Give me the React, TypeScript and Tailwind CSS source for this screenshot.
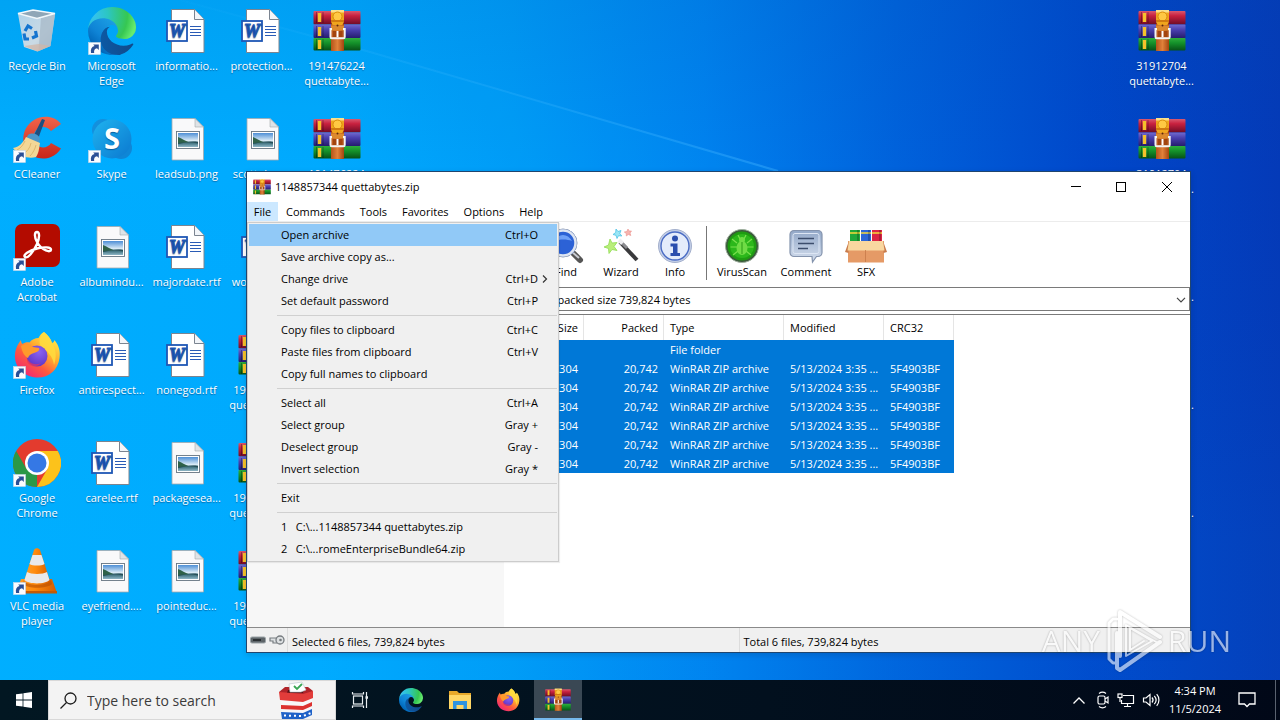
import type { ReactNode } from "react";
import { clsx } from "clsx";

// ---------- icons ----------

function ShortcutArrow() {
  return (
    <g>
      <rect x="0.5" y="35.5" width="12" height="12" fill="#fafcff" stroke="#c8d8e8" strokeWidth="0.6" />
      <path d="M3 46c-.6-3.800.6-6.200 3.600-6.900L5.200 37.500h5.600v5.500L9 41.300c-2.400.5-3.300 2-2.800 4.700z" fill="#2a4f96" />
    </g>
  );
}

function EdgePaths() {
  return (
    <>
      <defs>
        <linearGradient id="edgeDark" x1="63" y1="177" x2="241" y2="177" gradientUnits="userSpaceOnUse">
          <stop offset="0" stopColor="#0c59a4" />
          <stop offset="1" stopColor="#114a8b" />
        </linearGradient>
        <linearGradient id="edgeBlue" x1="157" y1="100" x2="46" y2="221" gradientUnits="userSpaceOnUse">
          <stop offset="0" stopColor="#1b9de2" />
          <stop offset="0.6" stopColor="#0f84d6" />
          <stop offset="1" stopColor="#0066b8" />
        </linearGradient>
        <radialGradient id="edgeGreen" cx="26" cy="45" r="230" gradientUnits="userSpaceOnUse">
          <stop offset="0" stopColor="#35c1f1" />
          <stop offset="0.35" stopColor="#2cc6c2" />
          <stop offset="0.8" stopColor="#36c752" />
          <stop offset="1" stopColor="#66eb6e" />
        </radialGradient>
      </defs>
      <path
        fill="url(#edgeDark)"
        d="M235.68 195.25a93.73 93.73 0 01-10.54 4.71 101.87 101.87 0 01-35.9 6.46c-47.32 0-88.54-32.55-88.54-74.32a31.48 31.48 0 0116.43-27.31c-42.8 1.8-53.8 46.4-53.8 72.53 0 73.88 68.09 81.37 82.76 81.37 7.91 0 19.84-2.3 27-4.56l1.31-.44a128.34 128.34 0 0066.6-52.8 4 4 0 00-5.32-5.64z"
      />
      <path
        fill="url(#edgeBlue)"
        d="M105.73 241.42a79.2 79.2 0 01-22.74-21.34 80.72 80.72 0 0129.53-120c3.12-1.47 8.45-4.13 15.54-4a32.35 32.35 0 0125.69 13 31.88 31.88 0 016.36 18.66c0-.21 24.46-79.6-80-79.6-43.9 0-80 41.66-80 78.21a130.15 130.15 0 0012.11 56 128 128 0 00156.38 67.11 75.55 75.55 0 01-62.78-8z"
      />
      <path
        fill="url(#edgeGreen)"
        d="M152.33 148.86c-.81 1-3.3 2.5-3.3 5.66 0 2.61 1.7 5.12 4.72 7.23 14.38 10 41.49 8.68 41.56 8.68a59.56 59.56 0 0030.27-8.35 61.38 61.38 0 0030.43-52.88c.26-22.41-8-37.31-11.34-43.91C223.46 23.84 177.72 0 128 0A128 128 0 000 126.2c.48-36.54 36.8-66.05 80-66.05 3.5 0 23.46.34 42 10.07 16.34 8.58 24.9 18.94 30.85 29.21 6.18 10.67 7.28 24.15 7.28 29.52s-2.74 13.33-7.8 19.91z"
      />
    </>
  );
}

function EdgeIcon() {
  return (
    <svg viewBox="0 0 48 48" className="size-12">
      <g transform="scale(0.1875)">
        <EdgePaths />
      </g>
      <ShortcutArrow />
    </svg>
  );
}

function RarIcon({ className = "size-12" }: { className?: string }) {
  return (
    <svg viewBox="0 0 48 48" className={className}>
      <defs>
        <linearGradient id="bookRed" x1="0" y1="0" x2="0" y2="1">
          <stop offset="0" stopColor="#d9596f" />
          <stop offset="0.35" stopColor="#c8213f" />
          <stop offset="1" stopColor="#6e0c26" />
        </linearGradient>
        <linearGradient id="bookBlue" x1="0" y1="0" x2="0" y2="1">
          <stop offset="0" stopColor="#706bd0" />
          <stop offset="0.4" stopColor="#4a3fae" />
          <stop offset="1" stopColor="#251c6e" />
        </linearGradient>
        <linearGradient id="bookGreen" x1="0" y1="0" x2="0" y2="1">
          <stop offset="0" stopColor="#2fae3c" />
          <stop offset="0.4" stopColor="#14912a" />
          <stop offset="1" stopColor="#075217" />
        </linearGradient>
        <linearGradient id="strap" x1="0" y1="0" x2="1" y2="0">
          <stop offset="0" stopColor="#b5541a" />
          <stop offset="0.5" stopColor="#e0813a" />
          <stop offset="1" stopColor="#a3440f" />
        </linearGradient>
      </defs>
      <rect x="0.500" y="4" width="47" height="13.500" rx="1" fill="url(#bookRed)" />
      <rect x="0.500" y="17.500" width="47" height="13.500" rx="1" fill="url(#bookBlue)" />
      <rect x="0.500" y="31" width="47" height="12.500" rx="1" fill="url(#bookGreen)" />
      <path d="M3.500 5v11M3.500 19v11M3.500 32v11M10 5v11M10 19v11M10 32v11" stroke="#000" strokeOpacity="0.3" strokeWidth="1" />
      <path d="M6.500 6v9M6.500 20v9M6.500 33v9" stroke="#f5c22b" strokeWidth="3.400" />
      <rect x="18" y="17" width="13" height="27" fill="url(#strap)" />
      <path d="M18 3h13v10c0 4-2 5-2 5h-9s-2-1-2-5z" fill="#f0a51d" />
      <path d="M18 3h13v2.500H18z" fill="#fbe08a" />
      <circle cx="24.500" cy="9.500" r="4.500" fill="#ffc843" stroke="#d98b0a" />
      <path d="M18 13h13v2H18z" fill="#d07a10" />
      <path d="M18 18.500h13v5H18z" fill="#dd8a2e" />
      <circle cx="24.500" cy="18.500" r="1" fill="#5a2a08" />
      <path d="M19 22h-1.500v8c0 .8.600 1.300 1.300 1.300h11.600c.700 0 1.300-.5 1.300-1.300v-8H30" fill="none" stroke="#f4f4f4" strokeWidth="2" />
      <path d="M20 24h9v6h-9z" fill="#a3440f" />
      <path d="M24.500 24v6" stroke="#fff" strokeWidth="2" />
    </svg>
  );
}

function WordIcon() {
  return (
    <svg viewBox="0 0 48 48" className="size-12">
      <path d="M8.500 2.500h23l9.500 10V45.500H8.500z" fill="#fff" stroke="#7b8490" />
      <path d="M31.500 2.500v10H41" fill="#f2f5f9" stroke="#7b8490" />
      <path d="M27 19.500h11M27 22.500h11M27 25.500h11M27 28.500h11" stroke="#2a5bb5" strokeWidth="1.200" />
      <rect x="4" y="14" width="20" height="20" fill="#fff" stroke="#1e57b5" strokeWidth="1.800" />
      <text x="14" y="30" textAnchor="middle" fontFamily="Liberation Serif, serif" fontWeight="bold" fontStyle="italic" fontSize="18" fill="#1e57b5" stroke="#1e57b5" strokeWidth="0.900">
        W
      </text>
    </svg>
  );
}

function ImageIcon() {
  return (
    <svg viewBox="0 0 48 48" className="size-12">
      <defs>
        <linearGradient id="photo" x1="0" y1="0" x2="0" y2="1">
          <stop offset="0" stopColor="#4e8fd6" />
          <stop offset="0.55" stopColor="#dcecf6" />
          <stop offset="0.7" stopColor="#3c6f7c" />
          <stop offset="1" stopColor="#8fb6c6" />
        </linearGradient>
      </defs>
      <path d="M9 3.500h23l8.500 8.500v33H9z" fill="#f9f9fa" stroke="#a3a8ad" strokeWidth="0.800" />
      <path d="M32 3.500V12h8.500z" fill="#dfe3e6" stroke="#a3a8ad" strokeWidth="0.600" />
      <rect x="13.500" y="16.500" width="23" height="17" fill="#fff" stroke="#667482" strokeWidth="0.900" />
      <rect x="15" y="18" width="20" height="14" fill="url(#photo)" />
      <path d="M15 22c4 1.500 7 3.800 11 5.200l-11 1.300z" fill="#2f6148" />
      <path d="M15 29c6-2 14-2 20-.6V27c-5-.8-8-.2-12 .2L15 28z" fill="#27505a" />
    </svg>
  );
}

function RecycleBinIcon() {
  return (
    <svg viewBox="0 0 48 48" className="size-12">
      <defs>
        <linearGradient id="bin" x1="0" y1="0" x2="1" y2="1">
          <stop offset="0" stopColor="#b9d4e8" />
          <stop offset="0.6" stopColor="#d5dde4" />
          <stop offset="1" stopColor="#b4bec8" />
        </linearGradient>
      </defs>
      <path d="M5 7l18 2.500 19-2.500-4.500 32-13 5.500L11 40z" fill="url(#bin)" opacity="0.95" />
      <path d="M28 11l14-4-4.500 32-12 5z" fill="#a9bac9" opacity="0.8" />
      <path d="M11 39l15-2 11.500 2-13 5.500z" fill="#d3b5a4" opacity="0.7" />
      <path d="M5 6.500L20 3l22 3.500-18 5z" fill="#8fa6b7" stroke="#f1f7fb" strokeWidth="1.300" />
      <g fill="none" stroke="#1474cf" strokeWidth="3.200">
        <path d="M12 24l3-5 4 2.500" />
        <path d="M22.500 24l1 5-4.500 2" />
        <path d="M16 32h-4l-1-5.500" />
      </g>
    </svg>
  );
}

function CCleanerIcon() {
  return (
    <svg viewBox="0 0 48 48" className="size-12">
      <defs>
        <linearGradient id="ccRed" x1="0" y1="0" x2="0" y2="1">
          <stop offset="0" stopColor="#f0644a" />
          <stop offset="1" stopColor="#c9251a" />
        </linearGradient>
      </defs>
      <path d="M48 9C42 1 30-.5 21 5 11 11 8 23 12 32c4 10 16 14 26 10 4-1.500 8-5 10-8.500L38 28c-3 5-10 6-14 2-5-5-4-14 2-17 4-2 9-1 12 3z" fill="url(#ccRed)" />
      <path d="M29 4l3 1-7 19-5-2z" fill="#1c4f80" />
      <path d="M15 20c4-3 10-1 12 3l-1 6-13-5z" fill="#4a97c9" />
      <path d="M13 22l14 6c-1 5-1 10-4 14-7 2-16 0-23-9 6-1 10-5 13-11z" fill="#f3d796" />
      <path d="M12 26c-2 4-4 7-8 9M18 28c-1 5-4 9-8 11M23 30c-1 4-3 8-6 11" stroke="#d6a95c" fill="none" strokeWidth="0.700" />
      <ShortcutArrow />
    </svg>
  );
}

function SkypeIcon() {
  return (
    <svg viewBox="0 0 48 48" className="size-12">
      <defs>
        <linearGradient id="skype" x1="0" y1="0" x2="1" y2="1">
          <stop offset="0" stopColor="#1fb4f0" />
          <stop offset="1" stopColor="#0b78cf" />
        </linearGradient>
      </defs>
      <circle cx="15" cy="15" r="11" fill="#1390dd" />
      <circle cx="33" cy="33" r="11" fill="#0f86d6" />
      <circle cx="24" cy="24" r="19.500" fill="url(#skype)" />
      <text x="24" y="34" textAnchor="middle" fontFamily="Open Sans, sans-serif" fontWeight="bold" fontSize="29" fill="#fff">
        S
      </text>
      <ShortcutArrow />
    </svg>
  );
}

function AcrobatIcon() {
  return (
    <svg viewBox="0 0 48 48" className="size-12">
      <rect x="2" y="1" width="45" height="43" rx="7" fill="#b30b00" />
      <path
        d="M12 34c-2.500-2 4-6.500 12-8.500 7-1.800 14-1.500 14 1.200 0 3.300-9 1.300-14-7.700-3-5.500-2.500-10 0-10s3 5 0 12c-3.500 8-9.500 15-12 13z"
        fill="none"
        stroke="#fff"
        strokeWidth="2.400"
      />
      <ShortcutArrow />
    </svg>
  );
}

function FirefoxIcon({ className = "size-12", shortcut = false }: { className?: string; shortcut?: boolean }) {
  return (
    <svg viewBox="0 0 48 48" className={className}>
      <defs>
        <linearGradient id="foxFlame" x1="0.85" y1="0.1" x2="0.2" y2="0.95">
          <stop offset="0" stopColor="#ffe94a" />
          <stop offset="0.35" stopColor="#ffb02e" />
          <stop offset="0.65" stopColor="#ff5a3d" />
          <stop offset="1" stopColor="#ef2677" />
        </linearGradient>
        <radialGradient id="foxGlobe" cx="0.6" cy="0.3" r="0.8">
          <stop offset="0" stopColor="#8a63f2" />
          <stop offset="1" stopColor="#5b2fc0" />
        </radialGradient>
      </defs>
      <path
        d="M31 1c4 3 7 7 8 11 1.500-.5 2.500-2 2.500-3C46 15 47.500 20 46.500 27 45 39 36 46.500 25 46.500S3 39 2 27C1.500 20 4 14 8 9c0 2 .5 3 1.500 4 2-1.500 4.500-2 7-1.500C18.500 8.500 22 7 25.500 7c1.500-3 3-5 5.500-6z"
        fill="url(#foxFlame)"
      />
      <path d="M31 1c4 3 7 7 8 11 4 6 5 14 2 22-1-9-7-14-14-20-1-5 0-10 4-13z" fill="#ffdc3e" opacity="0.85" />
      <circle cx="24" cy="25" r="10.500" fill="url(#foxGlobe)" />
      <path d="M8 15c4-3 9-2 12 1l6 1c1 2-1 4-5 5-3 1-5 2-6 5-3-1-6-6-7-12z" fill="#ff9a2b" />
      <path d="M14 27c2 5 8 8 14 5-3 4-11 5-14-1z" fill="#e8365a" opacity="0.7" />
      {shortcut && <ShortcutArrow />}
    </svg>
  );
}

function ChromeIcon() {
  return (
    <svg viewBox="0 0 48 48" className="size-12">
      <circle cx="24" cy="24" r="24" fill="#e33b2e" />
      <path d="M3.200 12l10.400 18L24 24v24A24 24 0 013.200 12z" fill="#2b9846" />
      <path d="M34.400 30L24 48A24 24 0 0044.800 12H24z" fill="#fcc21b" />
      <circle cx="24" cy="24" r="12" fill="#fff" />
      <circle cx="24" cy="24" r="9.500" fill="#3578e5" />
      <ShortcutArrow />
    </svg>
  );
}

function VlcIcon() {
  return (
    <svg viewBox="0 0 48 48" className="size-12">
      <defs>
        <linearGradient id="cone" x1="0" y1="0" x2="1" y2="0">
          <stop offset="0" stopColor="#ffa02a" />
          <stop offset="0.45" stopColor="#ff8a0c" />
          <stop offset="1" stopColor="#d45c00" />
        </linearGradient>
      </defs>
      <path d="M8 32h31l5 14H3z" fill="url(#cone)" />
      <path d="M3 44h41v2.500H3z" fill="#c45a05" />
      <path d="M11 33c4 5.500 22 5.500 27 0l1 4c-5 5-25 5-29 0z" fill="#b84f00" opacity="0.6" />
      <path d="M21 3c1-2.500 5-2.500 6 0l10 31c-4 5-22 5-26 0z" fill="url(#cone)" />
      <path d="M19.500 8h9l3 9c-3 2-12 2-15 0zM14 25c4 2.500 16 2.500 20 0l2.500 8c-4 4.500-21 4.500-25 0z" fill="#e9e9ea" />
      <ShortcutArrow />
    </svg>
  );
}

// ---------- desktop ----------

type DesktopItem = { col: number; row: number; label: string; icon: ReactNode };

const DESKTOP: DesktopItem[] = [
  { col: 1, row: 1, label: "Recycle Bin", icon: <RecycleBinIcon /> },
  { col: 1, row: 2, label: "CCleaner", icon: <CCleanerIcon /> },
  { col: 1, row: 3, label: "Adobe Acrobat", icon: <AcrobatIcon /> },
  { col: 1, row: 4, label: "Firefox", icon: <FirefoxIcon shortcut /> },
  { col: 1, row: 5, label: "Google Chrome", icon: <ChromeIcon /> },
  { col: 1, row: 6, label: "VLC media player", icon: <VlcIcon /> },
  { col: 2, row: 1, label: "Microsoft Edge", icon: <EdgeIcon /> },
  { col: 2, row: 2, label: "Skype", icon: <SkypeIcon /> },
  { col: 2, row: 3, label: "albumindu...", icon: <ImageIcon /> },
  { col: 2, row: 4, label: "antirespect...", icon: <WordIcon /> },
  { col: 2, row: 5, label: "carelee.rtf", icon: <WordIcon /> },
  { col: 2, row: 6, label: "eyefriend....", icon: <ImageIcon /> },
  { col: 3, row: 1, label: "informatio...", icon: <WordIcon /> },
  { col: 3, row: 2, label: "leadsub.png", icon: <ImageIcon /> },
  { col: 3, row: 3, label: "majordate.rtf", icon: <WordIcon /> },
  { col: 3, row: 4, label: "nonegod.rtf", icon: <WordIcon /> },
  { col: 3, row: 5, label: "packagesea...", icon: <ImageIcon /> },
  { col: 3, row: 6, label: "pointeduc...", icon: <ImageIcon /> },
  { col: 4, row: 1, label: "protection...", icon: <WordIcon /> },
  { col: 4, row: 2, label: "scottokay...", icon: <ImageIcon /> },
  { col: 4, row: 3, label: "workshop...", icon: <WordIcon /> },
  { col: 4, row: 4, label: "191476224 quettabyte...", icon: <RarIcon /> },
  { col: 4, row: 5, label: "191476224 quettabyte...", icon: <RarIcon /> },
  { col: 4, row: 6, label: "191476224 quettabyte...", icon: <RarIcon /> },
  { col: 5, row: 1, label: "191476224 quettabyte...", icon: <RarIcon /> },
  { col: 5, row: 2, label: "191476224 quettabyte...", icon: <RarIcon /> },
  { col: 16, row: 1, label: "31912704 quettabyte...", icon: <RarIcon /> },
  { col: 16, row: 2, label: "31912704 quettabyte...", icon: <RarIcon /> },
  { col: 16, row: 3, label: "31912704 quettabyte...", icon: <RarIcon /> },
  { col: 16, row: 4, label: "31912704 quettabyte...", icon: <RarIcon /> },
  { col: 16, row: 5, label: "31912704 quettabyte...", icon: <RarIcon /> },
];

function Wallpaper() {
  return (
    <svg viewBox="0 0 1280 680" preserveAspectRatio="none" className="absolute inset-0 size-full" aria-hidden>
      <defs>
        <linearGradient id="sky" x1="0" y1="0" x2="1" y2="0">
          <stop offset="0" stopColor="#00aeff" />
          <stop offset="0.25" stopColor="#00aaff" />
          <stop offset="0.4" stopColor="#009bf7" />
          <stop offset="0.55" stopColor="#0082ef" />
          <stop offset="0.7" stopColor="#0062dc" />
          <stop offset="0.85" stopColor="#0048cb" />
          <stop offset="1" stopColor="#043ab8" />
        </linearGradient>
        <linearGradient id="shade" x1="0" y1="0" x2="0" y2="1">
          <stop offset="0" stopColor="#0050a0" stopOpacity="0.12" />
          <stop offset="0.25" stopColor="#0050a0" stopOpacity="0" />
          <stop offset="0.8" stopColor="#00b8ff" stopOpacity="0.05" />
        </linearGradient>
        <linearGradient id="beam" x1="0" y1="0" x2="1" y2="0">
          <stop offset="0" stopColor="#3fc0ff" stopOpacity="0.05" />
          <stop offset="1" stopColor="#3fb0ff" stopOpacity="0.45" />
        </linearGradient>
      </defs>
      <rect width="1280" height="680" fill="url(#sky)" />
      <rect width="1280" height="680" fill="url(#shade)" />
      <path d="M180 0L370 52L778 171" fill="none" stroke="url(#beam)" strokeWidth="2" />
      <path d="M180 0L370 52L778 171H0V0z" fill="#00b4ff" opacity="0.08" />
    </svg>
  );
}

function DesktopIcons() {
  return (
    <ul className="relative grid grid-cols-[74px_repeat(15,75px)] grid-rows-[repeat(6,108px)] text-[11px] leading-[15px] text-white [text-shadow:0_1px_1px_#00285a80]">
      {DESKTOP.map((item) => (
        <li
          key={`${item.col}-${item.row}`}
          style={{ gridColumn: item.col, gridRow: item.row }}
          className="flex flex-col items-center gap-[3px] pt-[7px] text-center"
        >
          {item.icon}
          <span className="w-[68px]">{item.label}</span>
        </li>
      ))}
    </ul>
  );
}

// ---------- archive window ----------

const MENU_BAR = ["File", "Commands", "Tools", "Favorites", "Options", "Help"];

type MenuEntry = { label: string; keys?: string; submenu?: boolean; active?: boolean };

const FILE_MENU: MenuEntry[][] = [
  [
    { label: "Open archive", keys: "Ctrl+O", active: true },
    { label: "Save archive copy as..." },
    { label: "Change drive", keys: "Ctrl+D", submenu: true },
    { label: "Set default password", keys: "Ctrl+P" },
  ],
  [
    { label: "Copy files to clipboard", keys: "Ctrl+C" },
    { label: "Paste files from clipboard", keys: "Ctrl+V" },
    { label: "Copy full names to clipboard" },
  ],
  [
    { label: "Select all", keys: "Ctrl+A" },
    { label: "Select group", keys: "Gray +" },
    { label: "Deselect group", keys: "Gray -" },
    { label: "Invert selection", keys: "Gray *" },
  ],
  [{ label: "Exit" }],
  [{ label: "1   C:\\...1148857344 quettabytes.zip" }, { label: "2   C:\\...romeEnterpriseBundle64.zip" }],
];

function FileMenu() {
  return (
    <div role="menu" className="absolute left-0 top-[50px] w-[312px] border border-[#ccc] bg-[#f0f0f0] p-px shadow-[1px_1px_1px_#0001]">
      {FILE_MENU.map((group, i) => (
        <div key={i} className={clsx(i > 0 && "ml-7 mt-[3px] border-t border-[#d0d0d0] pt-[3px]")}>
          {group.map((entry) => (
            <button
              key={entry.label}
              role="menuitem"
              className={clsx(
                "flex h-[22px] w-full items-center justify-between whitespace-pre pr-[19px] text-left",
                i > 0 ? "pl-1" : "pl-8",
                entry.active && "bg-[#91c9f7]",
              )}
            >
              <span>{entry.label}</span>
              <span className="relative">
                {entry.keys}
                {entry.submenu && (
                  <svg viewBox="0 0 6 8" className="absolute -right-[10px] top-1 h-2 w-1.5">
                    <path d="M1 .5L4.500 4 1 7.500" fill="none" stroke="#333" strokeWidth="1.200" />
                  </svg>
                )}
              </span>
            </button>
          ))}
        </div>
      ))}
    </div>
  );
}

function FindIcon() {
  return (
    <svg viewBox="0 0 36 36" className="size-9">
      <path d="M24 24l8 8" stroke="#555" strokeWidth="6" strokeLinecap="round" />
      <path d="M23 23l8 7" stroke="#c9ccd2" strokeWidth="2" />
      <circle cx="15" cy="15" r="14" fill="#2c62d6" stroke="#8a97ad" />
      <circle cx="15" cy="15" r="12.500" fill="none" stroke="#dfe6f2" strokeWidth="2.500" />
      <path d="M6 13c4-8 14-8 18 0-5-2-12-2-18 0z" fill="#7fb0ff" opacity="0.8" />
    </svg>
  );
}

function WizardIcon() {
  return (
    <svg viewBox="0 0 36 36" className="size-9">
      <path d="M17 14l17 18" stroke="#3a3a3c" strokeWidth="4" />
      <path d="M17 13l7 7" stroke="#8a8a8e" strokeWidth="3" />
      <path d="M16 12l3.500 3.500" stroke="#ededf0" strokeWidth="4" />
      <path d="M7 11l2 4 5-.5-3 4 3 4-5-1-3 4-.5-5-4.500-1.500 4.500-2z" fill="#b9ee7a" stroke="#8fdc52" strokeWidth="0.800" />
      <path d="M13 1l2 2.500 3-1-1.200 3 2 2.500-3.300-.3-1.500 2.800-1-3.200-3-.8 2.700-2z" fill="#9be6f5" stroke="#4cc3e6" strokeWidth="0.800" />
      <path d="M25 1l1 2 2.500 0-1.500 2 .8 2.500-2.500-1-2 1.500v-2.500l-2-1.500 2.500-.5z" fill="#f7b3ae" stroke="#ea8f8a" strokeWidth="0.600" />
    </svg>
  );
}

function InfoIcon() {
  return (
    <svg viewBox="0 0 36 36" className="size-9">
      <circle cx="18" cy="18" r="16.500" fill="#c4cfe8" stroke="#a4b0cc" />
      <circle cx="18" cy="18" r="14" fill="#e4ecfb" stroke="#4a6cc4" strokeWidth="1.400" />
      <circle cx="18" cy="10.500" r="3" fill="#2b4fae" />
      <path d="M13.500 15.500h7v9.500h2.500v3h-9.500v-3h2.500v-6.500h-2.500z" fill="#2b4fae" />
    </svg>
  );
}

function VirusIcon() {
  return (
    <svg viewBox="0 0 36 36" className="size-9">
      <circle cx="18" cy="18" r="16.500" fill="#3b5a3b" stroke="#9fb09f" />
      <circle cx="18" cy="18" r="14.500" fill="#1f9c12" />
      <circle cx="18" cy="18" r="12" fill="#2cb81b" />
      <g stroke="#7be04e" strokeWidth="1.200" fill="none">
        <path d="M8 11l5 4M28 11l-5 4M6.500 19H13M29.500 19H23M9 27l5-4M27 27l-5-4M14 7l2 4M22 7l-2 4" />
      </g>
      <ellipse cx="18" cy="20" rx="5.500" ry="7" fill="#6fdc45" />
      <circle cx="18" cy="12" r="3" fill="#6fdc45" />
      <path d="M18 14v12" stroke="#2a9c16" />
    </svg>
  );
}

function CommentIcon() {
  return (
    <svg viewBox="0 0 36 36" className="size-9">
      <defs>
        <linearGradient id="bubble" x1="0" y1="0" x2="0" y2="1">
          <stop offset="0" stopColor="#93a8c8" />
          <stop offset="1" stopColor="#d5dfee" />
        </linearGradient>
      </defs>
      <path d="M6 2.500h24a4 4 0 014 4v18a4 4 0 01-4 4h-1.500l-4 5.500-.5-5.500H6a4 4 0 01-4-4v-18a4 4 0 014-4z" fill="url(#bubble)" stroke="#8493ad" strokeWidth="1.200" />
      <rect x="5" y="5.500" width="26" height="20" rx="2" fill="none" stroke="#dde6f4" />
      <path d="M10 10.500h16M10 15.500h16M10 20.500h10" stroke="#3c4d6c" strokeWidth="1.600" />
    </svg>
  );
}

function SfxIcon() {
  return (
    <svg viewBox="0 0 42 36" className="h-9 w-[42px]">
      <path d="M5 2h10v14H5z" fill="#1ea83a" />
      <path d="M16 2h10v14H16z" fill="#2c66d8" />
      <path d="M27 2h10v14H27z" fill="#dc2445" />
      <path d="M5 5h10M16 5h10M27 5h10" stroke="#f6d83a" strokeWidth="1.500" />
      <path d="M13 2v12M24 2v12M35 2v12" stroke="#000" strokeOpacity="0.2" strokeWidth="2" />
      <path d="M3 13h36v21.500H3z" fill="#e59a66" />
      <path d="M4 13l-4 11 3.500 1zM38 13l4 11-3.500 1z" fill="#c97c4c" />
      <path d="M4 13h34l1.500 9.500h-37z" fill="#f9d7a0" />
      <path d="M20.500 22v12" stroke="#c77a48" strokeWidth="0.800" />
    </svg>
  );
}

function ToolButton({ label, icon, className }: { label: string; icon: ReactNode; className: string }) {
  return (
    <button className={clsx("flex flex-col items-center", className)}>
      {icon}
      {label}
    </button>
  );
}

function Toolbar() {
  return (
    <div className="flex h-[66px] items-start border-t border-[#ececec] pl-[290px] pt-1.5 leading-[15px]">
      <ToolButton label="Find" icon={<FindIcon />} className="w-[58px]" />
      <ToolButton label="Wizard" icon={<WizardIcon />} className="w-[52px]" />
      <ToolButton label="Info" icon={<InfoIcon />} className="w-14" />
      <div className="mx-[3px] -mt-0.5 h-[54px] w-px bg-[#777]" />
      <ToolButton label="VirusScan" icon={<VirusIcon />} className="w-16" />
      <ToolButton label="Comment" icon={<CommentIcon />} className="w-16" />
      <ToolButton label="SFX" icon={<SfxIcon />} className="w-14" />
    </div>
  );
}

function AddressBar() {
  return (
    <div className="relative mb-[3px]">
      <select
        aria-label="Archive path"
        className="h-6 w-full appearance-none rounded-none border border-[#7a7a7a] bg-white pl-[296px] pr-5 pt-0.5 outline-none"
      >
        <option>unpacked size 739,824 bytes</option>
      </select>
      <svg viewBox="0 0 10 6" className="pointer-events-none absolute right-1 top-[10px] h-1.5 w-2.5">
        <path d="M1 .8l4 4 4-4" fill="none" stroke="#444" strokeWidth="1.200" />
      </svg>
    </div>
  );
}

const COLUMNS = [
  { title: "Name", className: "w-[257px] text-left" },
  { title: "Size", className: "w-20 text-right" },
  { title: "Packed", className: "w-20 text-right" },
  { title: "Type", className: "w-[120px] text-left" },
  { title: "Modified", className: "w-[100px] text-left" },
  { title: "CRC32", className: "w-[70px] text-left" },
];

const FILE_ROW = ["", "123,304", "20,742", "WinRAR ZIP archive", "5/13/2024 3:35 ...", "5F4903BF"];
const ROWS = [["", "", "", "File folder", "", ""], ...Array.from({ length: 6 }, () => FILE_ROW)];

function FileTable() {
  return (
    <div className="flex min-h-[313px] border-t border-[#7a7a7a] bg-[linear-gradient(to_right,#f7f7f7_257px,white_257px)]">
      <table className="h-fit w-[707px] table-fixed border-separate border-spacing-0">
        <thead className="bg-white">
          <tr className="h-[25px]">
            {COLUMNS.map((col) => (
              <th key={col.title} className={clsx("border-r border-[#e5e5e5] pl-1.5 pr-[5px] pt-0.5 font-normal", col.className)}>
                {col.title}
              </th>
            ))}
          </tr>
        </thead>
        <tbody className="bg-[#0078d7] text-white">
          {ROWS.map((row, i) => (
            <tr key={i} className="h-[19px] leading-[19px]">
              {row.map((cell, j) => (
                <td key={j} className={clsx("whitespace-nowrap px-1.5", (j === 1 || j === 2) && "text-right")}>
                  {cell}
                </td>
              ))}
            </tr>
          ))}
        </tbody>
      </table>
    </div>
  );
}

function StatusBar() {
  return (
    <div className="flex h-[25px] items-stretch border-t border-[#8a8a8a] bg-[#f0f0f0] leading-[27px]">
      <div className="flex w-[41px] items-center gap-[3px] border-r border-[#dcdcdc] pl-[3px]">
        <svg viewBox="0 0 16 8" className="h-2 w-4">
          <rect x="0.500" y="1" width="15" height="6" rx="1.500" fill="#5d6468" stroke="#9aa2a6" />
          <path d="M3 4h8" stroke="#2b3033" strokeWidth="2" />
        </svg>
        <svg viewBox="0 0 16 12" className="h-3 w-4">
          <path d="M8 4H1v3h3v2h4" fill="#dde0e2" stroke="#777c80" strokeWidth="1.200" />
          <circle cx="11" cy="6" r="4" fill="#dde0e2" stroke="#777c80" strokeWidth="1.300" />
          <circle cx="11.500" cy="6" r="1.300" fill="#777c80" />
        </svg>
      </div>
      <div className="flex-1 border-r border-[#dcdcdc] pl-1">Selected 6 files, 739,824 bytes</div>
      <div className="flex-1 pl-1">Total 6 files, 739,824 bytes</div>
    </div>
  );
}

function TitleBar() {
  return (
    <div className="flex h-[30px] items-center">
      <RarIcon className="ml-1.5 size-[18px]" />
      <h1 className="ml-1 flex-1">1148857344 quettabytes.zip</h1>
      <button aria-label="Minimize" className="flex h-full w-[45px] items-center justify-center">
        <svg viewBox="0 0 10 10" className="size-[10px]">
          <path d="M0 4.500h10" stroke="#000" />
        </svg>
      </button>
      <button aria-label="Maximize" className="flex h-full w-[46px] items-center justify-center">
        <svg viewBox="0 0 10 10" className="size-[10px]">
          <rect x="0.500" y="0.500" width="9" height="9" fill="none" stroke="#000" />
        </svg>
      </button>
      <button aria-label="Close" className="flex h-full w-[46px] items-center justify-center">
        <svg viewBox="0 0 10 10" className="size-[10px]">
          <path d="M0 0l10 10M10 0L0 10" stroke="#000" />
        </svg>
      </button>
    </div>
  );
}

function ArchiveWindow() {
  return (
    <main className="absolute left-[246px] right-[89px] top-[171px] border border-[#20456e] bg-white text-[11px] text-black shadow-[0_2px_6px_#0002]">
      <TitleBar />
      <nav className="flex h-[19px] items-center gap-px">
        {MENU_BAR.map((name, i) => (
          <button key={name} className={clsx("h-full pt-0.5", i === 0 ? "w-[31px] bg-[#cce8ff]" : "px-[7px]")}>
            {name}
          </button>
        ))}
      </nav>
      <Toolbar />
      <AddressBar />
      <FileTable />
      <StatusBar />
      <FileMenu />
    </main>
  );
}

function Watermark() {
  return (
    <div className="absolute bottom-[7px] right-[49px] flex items-center gap-1.5 text-[30px] font-medium leading-none text-white opacity-60 [text-shadow:0_0_2px_#0008]">
      <span>ANY</span>
      <svg viewBox="0 0 56 64" className="h-16 w-14 drop-shadow-[0_0_1px_#0006]" fill="none" stroke="#fff" strokeLinejoin="round" strokeLinecap="round">
        <path d="M11 10H7l-4 4v36l4 4h4" strokeWidth="3" />
        <path d="M14 47V3l40 25" strokeWidth="4" />
        <path d="M54 33L14 61l-3-2V24" strokeWidth="4" />
        <path d="M20 47V16l32 18M20 47l26-15-22-13v22l14-9" strokeWidth="2" />
      </svg>
      <span>RUN</span>
    </div>
  );
}

// ---------- taskbar ----------

function BallotBox() {
  return (
    <svg viewBox="0 0 36 38" className="h-[38px] w-9">
      <path d="M1 11l6-5h23l5 4-3 5H4z" fill="#b0242a" />
      <path d="M10 9h16l-1 3H9z" fill="#5c1014" />
      <path d="M11 3l13-2 4 8-5 2H12z" fill="#fff" stroke="#b9c4cb" strokeWidth="0.600" />
      <path d="M16 5l3 3 5-5" fill="none" stroke="#3aa655" strokeWidth="1.800" />
      <path d="M3 18l22 2 9-3v17l-9 4H5z" fill="#f7f7f9" />
      <path d="M1 11l24 2 10-3v7l-10 4-23-2z" fill="#e23c3a" />
      <path d="M3 24l22 1 9-4v4l-9 4-22-1z" fill="#dc3230" />
      <path d="M3 31l22 1 9-4v6l-9 4H4z" fill="#1f62c8" />
      <path d="M6 34.500l19 .5 8-3" fill="none" stroke="#fff" strokeWidth="2" strokeDasharray="2 3" />
    </svg>
  );
}

function TaskView() {
  return (
    <svg viewBox="0 0 18 18" className="size-[18px]" fill="none" stroke="#e9eef2" strokeWidth="1.200">
      <rect x="2.500" y="5" width="9" height="8" />
      <path d="M1.500 1v2h11V1M1.500 17v-2h11v2M15.500 1v16" />
      <path d="M14.500 6.500h2.500" strokeWidth="2.500" />
    </svg>
  );
}

function FolderIcon() {
  return (
    <svg viewBox="0 0 24 24" className="size-6">
      <path d="M1 3h8l2 2h12v16H1z" fill="#e8a92a" />
      <path d="M1 7h22v14H1z" fill="#ffd766" />
      <path d="M5 13h14v8h-3.500v-4h-7v4H5z" fill="#2f94df" />
    </svg>
  );
}

function TrayIcons() {
  return (
    <div className="flex items-center gap-[7px] text-white">
      <svg viewBox="0 0 12 7" className="mr-1 h-[7px] w-3" fill="none" stroke="currentColor" strokeWidth="1.300">
        <path d="M.5 6.500L6 1l5.500 5.500" />
      </svg>
      <svg viewBox="0 0 14 18" className="h-[18px] w-3.5" fill="none" stroke="currentColor" strokeWidth="1.200">
        <rect x="2" y="5" width="7" height="8" rx="1.500" />
        <path d="M9 8l3-2v6l-3-2M3 2.500c2-1.500 5-1.500 7 0M3 15.500c2 1.500 5 1.500 7 0" />
      </svg>
      <svg viewBox="0 0 18 16" className="h-4 w-[18px]" fill="none" stroke="currentColor" strokeWidth="1.200">
        <path d="M6 3.500h10.500v8H4.500V8M10.500 11.500V14M7 14.500h7" />
        <rect x="1" y="2" width="4" height="3.500" />
        <path d="M3 5.500V10" />
      </svg>
      <svg viewBox="0 0 18 16" className="h-4 w-[18px]" fill="none" stroke="currentColor" strokeWidth="1.200">
        <path d="M1.500 6v4H4l4 3.500v-11L4 6zM10 5.500c1.300 1.500 1.300 3.500 0 5M12.300 3.800c2.200 2.500 2.200 5.900 0 8.400M14.700 2.200c3 3.400 3 8.200 0 11.600" />
      </svg>
    </div>
  );
}

function Taskbar() {
  return (
    <footer className="flex h-10 shrink-0 items-stretch bg-[linear-gradient(to_right,#021722,#02101e_60%,#010818)] text-white">
      <button aria-label="Start" className="flex w-12 items-center justify-center">
        <svg viewBox="0 0 16 16" className="size-4" fill="#fff">
          <path d="M0 2.300l6.600-.9v6.200H0zM7.400 1.300L16 0v7.600H7.400zM0 8.400h6.600v6.200L0 13.700zM7.400 8.400H16V16l-8.600-1.200z" />
        </svg>
      </button>
      <label className="flex w-72 items-center border border-[#d8d8d8] bg-[#f3f3f3] pl-[11px] text-[#3b3b3b]">
        <svg viewBox="0 0 17 17" className="size-[17px]" fill="none" stroke="#1c1c1c" strokeWidth="1.300">
          <circle cx="10.500" cy="6.500" r="5.500" />
          <path d="M6.500 10.500L.5 16.500" />
        </svg>
        <input
          type="text"
          aria-label="Search"
          placeholder="Type here to search"
          className="ml-2.5 w-full min-w-0 flex-1 bg-transparent pt-0.5 text-sm outline-none placeholder:text-[#3b3b3b]"
        />
        <span className="mr-[21px]">
          <BallotBox />
        </span>
      </label>
      <button aria-label="Task View" className="flex w-12 items-center justify-center">
        <TaskView />
      </button>
      <button aria-label="Microsoft Edge" className="flex w-[54px] items-center justify-center">
        <svg viewBox="0 0 256 256" className="size-6">
          <EdgePaths />
        </svg>
      </button>
      <button aria-label="File Explorer" className="flex w-11 items-center justify-center">
        <FolderIcon />
      </button>
      <button aria-label="Firefox" className="flex w-[52px] items-center justify-center">
        <FirefoxIcon className="size-6" />
      </button>
      <button aria-label="WinRAR" className="flex w-12 items-center justify-center border-b-2 border-[#76b9ed] bg-[#3a4854] pt-0.5">
        <RarIcon className="size-[26px]" />
      </button>
      <div className="ml-auto flex items-center">
        <TrayIcons />
        <time className="ml-2 w-[54px] text-center text-[11px] leading-[18px]">
          4:34 PM
          <br />
          11/5/2024
        </time>
        <button aria-label="Notifications" className="ml-4">
          <svg viewBox="0 0 18 18" className="size-[18px]" fill="none" stroke="#fff" strokeWidth="1.300">
            <path d="M1 2h16v11h-5.500L9 15.500 6.500 13H1z" />
          </svg>
        </button>
        <div className="ml-[19px] mr-1 h-10 w-px bg-[#5a6270]" />
      </div>
    </footer>
  );
}

export default function App() {
  return (
    <div className="flex h-screen min-h-[720px] flex-col overflow-hidden font-['Open_Sans','Noto_Sans',sans-serif]">
      <div className="relative flex-1 overflow-hidden">
        <Wallpaper />
        <DesktopIcons />
        <ArchiveWindow />
        <Watermark />
      </div>
      <Taskbar />
    </div>
  );
}
